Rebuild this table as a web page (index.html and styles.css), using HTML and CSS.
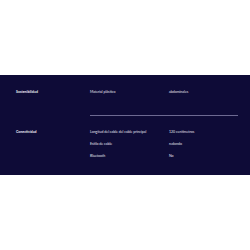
FILE: index.html
```html
<!DOCTYPE html>
<html lang="es">
<head>
<meta charset="utf-8">
<link rel="stylesheet" href="styles.css">
</head>
<body>
<div class="panel">
  <section class="group first">
    <div class="label">Sostenibilidad</div>
    <div class="specs">
      <div class="spec"><span>Material plástico</span><span>abdominales</span></div>
    </div>
  </section>
  <section class="group second">
    <div class="label">Conectividad</div>
    <div class="specs">
      <div class="spec"><span>Longitud del cable del cable principal</span><span>120 centímetros</span></div>
      <div class="spec"><span>Estilo de cable</span><span>redondo</span></div>
      <div class="spec"><span>Bluetooth</span><span>No</span></div>
    </div>
  </section>
</div>
</body>
</html>
```
FILE: styles.css
```css
html, body {
  margin: 0;
  padding: 0;
  background: #ffffff;
}
body {
  font-family: Lato, "Liberation Sans", sans-serif;
  font-size: 3.5px;
  color: #e4e3ee;
}
.panel {
  margin-top: 75px;
  height: 100px;
  box-sizing: border-box;
  background: #0e0b37;
  padding: 15px 12px 0 16px;
}
.group {
  display: grid;
  grid-template-columns: 74px 1fr;
}
.label {
  font-weight: 700;
  line-height: 4px;
  color: #f1f0f7;
}
.specs {
  display: flex;
  flex-direction: column;
  gap: 8px;
}
.first .specs {
  padding-bottom: 21px;
  border-bottom: 1px solid #6d6a92;
}
.second {
  padding-top: 14px;
}
.spec {
  display: grid;
  grid-template-columns: 79px 1fr;
  line-height: 4px;
}
```
